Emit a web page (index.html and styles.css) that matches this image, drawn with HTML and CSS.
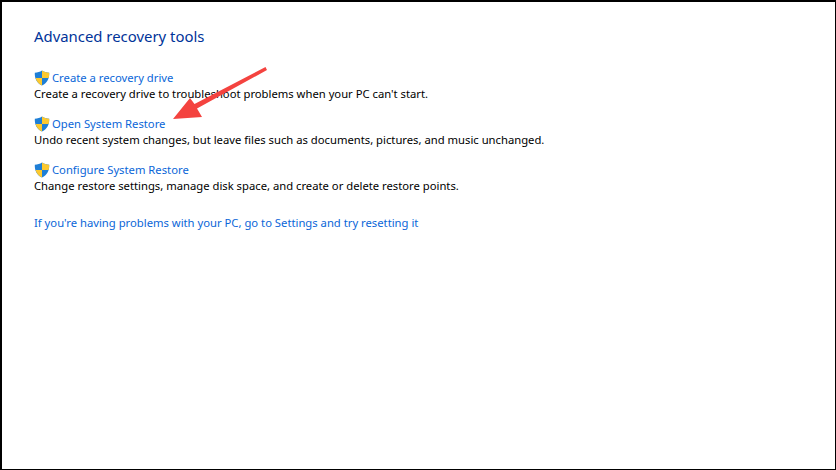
FILE: index.html
```html
<!DOCTYPE html>
<html lang="en">
<head>
<meta charset="utf-8">
<title>Advanced recovery tools</title>
<link rel="stylesheet" href="styles.css">
</head>
<body>
<main class="window">
  <h1 class="title">Advanced recovery tools</h1>
  <ul class="tools">
    <li class="tool">
      <a class="tool-link" href="#"><svg class="shield" viewBox="0 0 16 16"><path d="M8 .6C10 2 12.500 2.700 15.200 2.800 15.400 8.500 13.500 13 8 15.500 2.500 13 .6 8.500.8 2.800 3.500 2.700 6 2 8 .6Z" fill="#1f7fd6"/><path d="M8 .6C10 2 12.500 2.700 15.200 2.800 15.300 4.800 15.100 6.500 14.600 8H8ZM8 8V15.500C4.800 14 2.600 11.500 1.500 8Z" fill="#fdc92f"/></svg>Create a recovery drive</a>
      <p class="desc">Create a recovery drive to troubleshoot problems when your PC can't start.</p>
    </li>
    <li class="tool">
      <a class="tool-link" href="#"><svg class="shield" viewBox="0 0 16 16"><path d="M8 .6C10 2 12.500 2.700 15.200 2.800 15.400 8.500 13.500 13 8 15.500 2.500 13 .6 8.500.8 2.800 3.500 2.700 6 2 8 .6Z" fill="#1f7fd6"/><path d="M8 .6C10 2 12.500 2.700 15.200 2.800 15.300 4.800 15.100 6.500 14.600 8H8ZM8 8V15.500C4.800 14 2.600 11.500 1.500 8Z" fill="#fdc92f"/></svg>Open System Restore</a>
      <p class="desc">Undo recent system changes, but leave files such as documents, pictures, and music unchanged.</p>
    </li>
    <li class="tool">
      <a class="tool-link" href="#"><svg class="shield" viewBox="0 0 16 16"><path d="M8 .6C10 2 12.500 2.700 15.200 2.800 15.400 8.500 13.500 13 8 15.500 2.500 13 .6 8.500.8 2.800 3.500 2.700 6 2 8 .6Z" fill="#1f7fd6"/><path d="M8 .6C10 2 12.500 2.700 15.200 2.800 15.300 4.800 15.100 6.500 14.600 8H8ZM8 8V15.500C4.800 14 2.600 11.500 1.500 8Z" fill="#fdc92f"/></svg>Configure System Restore</a>
      <p class="desc">Change restore settings, manage disk space, and create or delete restore points.</p>
    </li>
  </ul>
  <a class="reset" href="#">If you're having problems with your PC, go to Settings and try resetting it</a>
  <svg class="arrow" viewBox="0 0 836 470"><path d="M265.500 67 267 70 197 108.500 202 117 173 119 190 98 194.500 104Z" fill="#f4433f"/></svg>
</main>
</body>
</html>
```
FILE: styles.css
```css
* { box-sizing: border-box; }
html, body { margin: 0; padding: 0; }
body { width: 836px; height: 470px; background: #fff; font-family: "Noto Sans", "Open Sans", sans-serif; }
.window {
  position: relative;
  width: 836px;
  height: 470px;
  border-style: solid;
  border-color: #000;
  border-width: 2px 1px 1px 2px;
  padding: 24px 0 0 32px;
  overflow: hidden;
}
.title { margin: 0 0 24px; font-size: 14.9px; line-height: 20px; font-weight: 400; color: #003399; }
.tools { list-style: none; margin: 0; padding: 0; display: flex; flex-direction: column; gap: 14px; }
.tool { display: flex; flex-direction: column; }
.tool-link { display: flex; align-items: center; gap: 2px; height: 16px; font-size: 11.25px; line-height: 16px; color: #0a66d8; text-decoration: none; }
.shield { width: 16px; height: 16px; flex: none; }
.desc { margin: 0; font-size: 11.25px; line-height: 16px; color: #000; }
.reset { display: block; margin-top: 21px; font-size: 11.25px; line-height: 16px; color: #0a66d8; text-decoration: none; }
.arrow { position: absolute; left: -2px; top: -2px; width: 836px; height: 470px; pointer-events: none; }
```
